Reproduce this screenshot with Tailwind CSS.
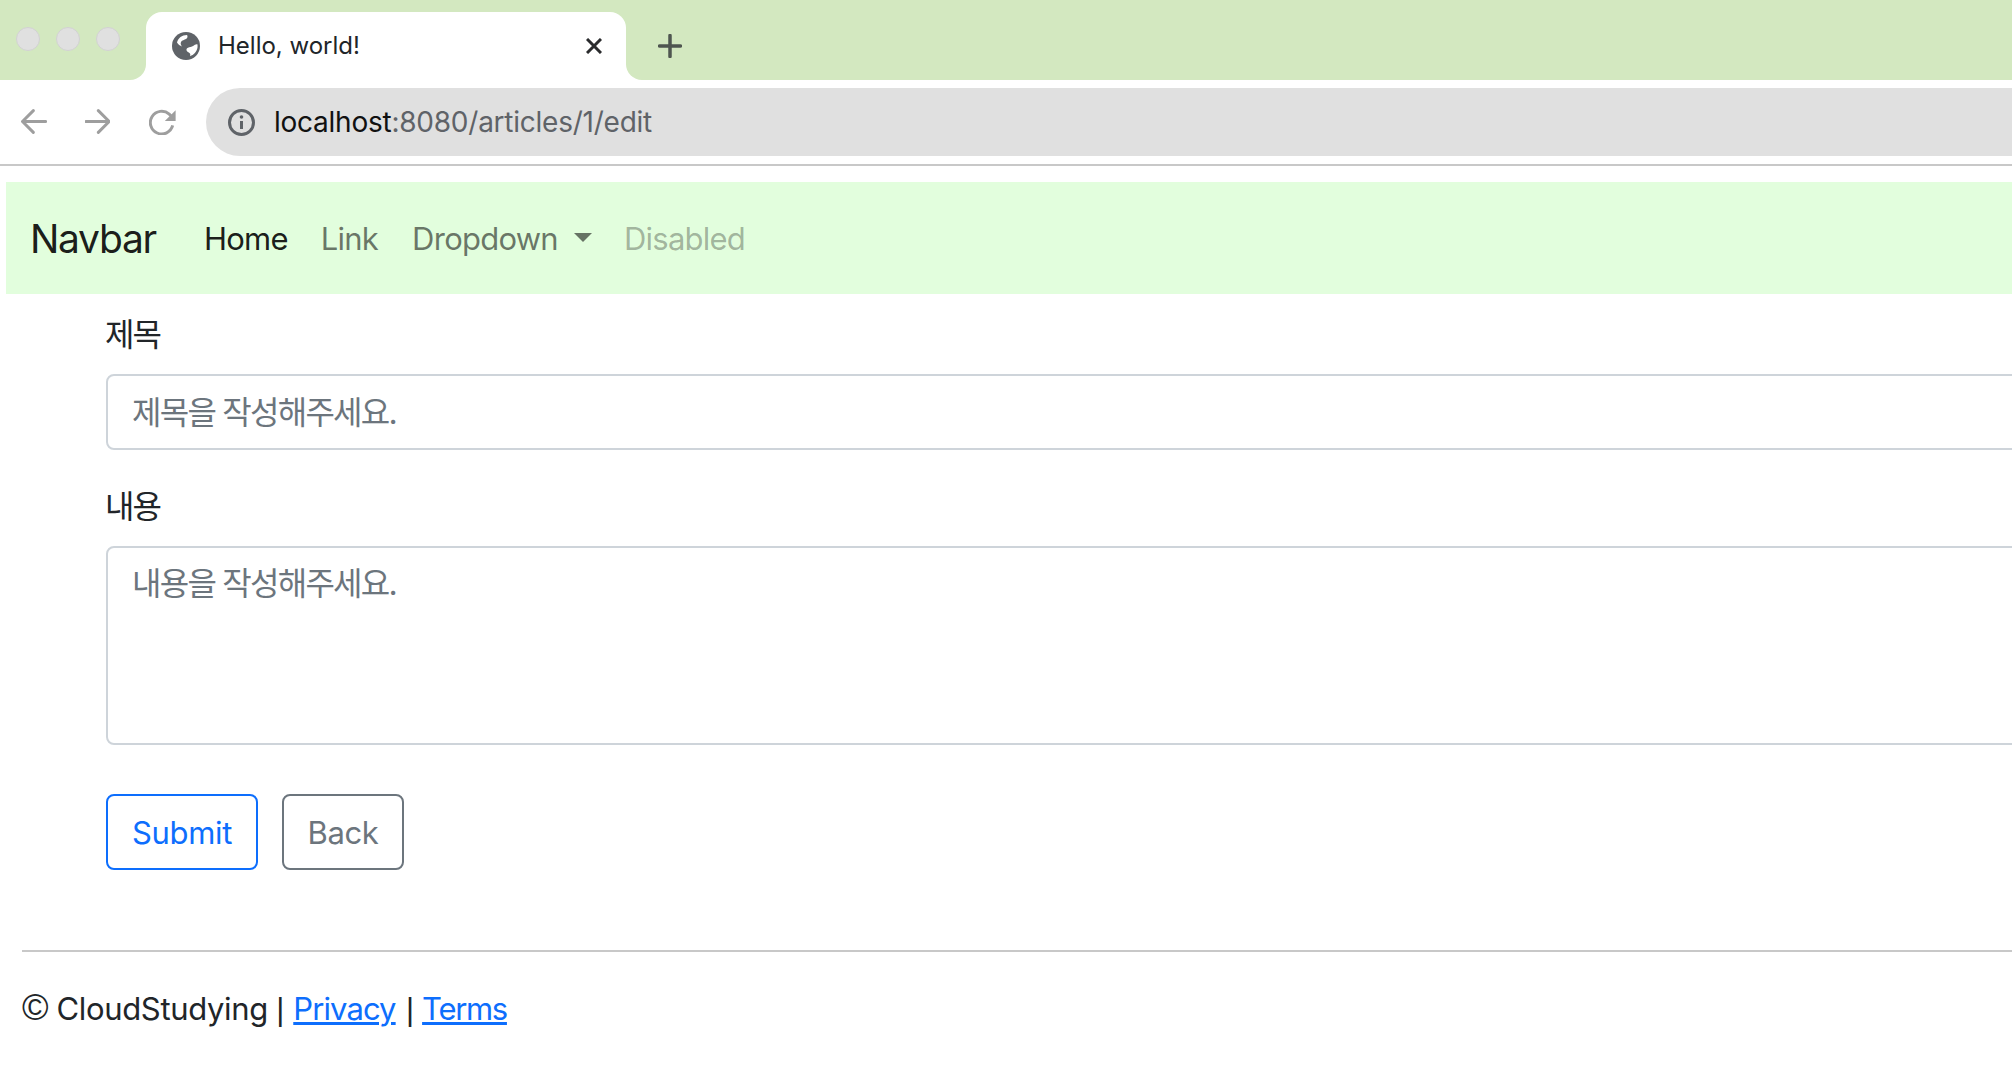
<!DOCTYPE html>
<html lang="ko">
<head>
<meta charset="utf-8">
<title>Hello, world!</title>
<script src="https://cdn.jsdelivr.net/npm/@tailwindcss/browser@4"></script>
</head>
<body class="w-[2012px] h-[1080px] overflow-hidden bg-white font-['Inter','Noto_Sans_CJK_KR',sans-serif] text-[#212529]">
<div class="w-[2012px] h-[166px]">
  <div class="h-[80px] bg-white flex">
    <div class="w-[146px] bg-[#d3e8c0] rounded-br-[16px] flex gap-[16px] pl-[16px] pt-[27px]">
      <span class="w-[24px] h-[24px] rounded-full bg-[#e0e0e0] border border-[#d2d2d2]"></span>
      <span class="w-[24px] h-[24px] rounded-full bg-[#e0e0e0] border border-[#d2d2d2]"></span>
      <span class="w-[24px] h-[24px] rounded-full bg-[#e0e0e0] border border-[#d2d2d2]"></span>
    </div>
    <div class="w-[480px] bg-[#d3e8c0] pt-[12px]">
      <div class="h-[68px] bg-white rounded-t-[16px] flex items-center pl-[26px] pr-[24px]">
        <svg class="w-[28px] h-[28px] shrink-0" viewBox="0 0 28 28"><circle cx="14" cy="14" r="14" fill="#5f6368"/><path d="M15 3c1 1.500.5 3-1 4-1.500 1-4 1-5 3-.8 1.600 0 3 1 4.500-2-.8-4-2-5-4C6 6 10 3 15 3ZM25.500 12.500c-1.500-.5-3 .5-4 1.200-2 1.200-4 1.300-5.500 2-1.500.6-1.800 1.800-1.300 3 .5 1.200 2 1.500 2.800 2.300 1 1 1 2 .5 3.200 3.800-1.300 6.800-4.500 7.500-8.700.1-1 .1-2 0-3Z" fill="#fff"/></svg>
        <span class="ml-[18px] text-[24px] leading-none">Hello, world!</span>
        <svg class="ml-auto w-[16px] h-[16px]" viewBox="0 0 16 16"><path d="M1 1l14 14M15 1L1 15" stroke="#2a2b2d" stroke-width="3" fill="none"/></svg>
      </div>
    </div>
    <div class="flex-1 bg-[#d3e8c0] rounded-bl-[16px] pl-[32px] pt-[34px]">
      <svg class="w-[24px] h-[24px]" viewBox="0 0 24 24"><path d="M12 1.500v21M1.500 12h21" stroke="#4f5650" stroke-width="3.500" stroke-linecap="round" fill="none"/></svg>
    </div>
  </div>
  <div class="h-[86px] border-b-2 border-[#c8c8c8] flex items-start bg-white">
    <svg class="ml-[21px] mt-[29px] w-[26px] h-[25px]" viewBox="0 0 26 25"><path d="M25 12.500H3M12.500 1.500 1.500 12.500l11 11" stroke="#9e9e9e" stroke-width="3" stroke-linecap="round" stroke-linejoin="round" fill="none"/></svg>
    <svg class="ml-[38px] mt-[29px] w-[26px] h-[25px]" viewBox="0 0 26 25"><path d="M1 12.500h22M13.500 1.500l11 11-11 11" stroke="#9e9e9e" stroke-width="3" stroke-linecap="round" stroke-linejoin="round" fill="none"/></svg>
    <svg class="ml-[39px] mt-[29px] w-[27px] h-[26px]" viewBox="0 0 27 26"><path d="M24 16.500A11.500 11.500 0 1 1 20.500 5l4 4" stroke="#9e9e9e" stroke-width="3" fill="none"/><path d="M27 1v11H16Z" fill="#9e9e9e"/></svg>
    <div class="ml-[30px] mt-[8px] w-[1830px] h-[68px] bg-[#e0e0e0] rounded-l-[34px] flex items-center pl-[22px]">
      <svg class="w-[27px] h-[27px] shrink-0" viewBox="0 0 27 27"><circle cx="13.500" cy="13.500" r="12" stroke="#5f6368" stroke-width="3" fill="none"/><path d="M13.500 12v8" stroke="#5f6368" stroke-width="3"/><circle cx="13.500" cy="8" r="1.800" fill="#5f6368"/></svg>
      <span class="ml-[19px] text-[28px] leading-none tracking-[-0.24px] text-[#111]">localhost<span class="text-[#5f6368]">:8080/articles/1/edit</span></span>
    </div>
  </div>
</div>
<nav class="mt-[16px] ml-[6px] h-[112px] bg-[#e2fedd] flex items-center pl-[24px] text-[31px] leading-none tracking-[-0.75px]">
  <a class="text-[39px] tracking-[-1.3px] text-black/90 mr-[48px]">Navbar</a>
  <a class="text-black/90 mr-[33px]">Home</a>
  <a class="text-black/55 mr-[34px]">Link</a>
  <a class="text-black/55 mr-[32px] flex items-center">Dropdown<span class="ml-[16px] mb-[2px] w-0 h-0 border-x-[9px] border-x-transparent border-t-[9px] border-t-black/55"></span></a>
  <a class="text-black/30">Disabled</a>
</nav>
<main class="pl-[106px] w-[2100px] pr-[20px]">
  <label class="block mt-[21px] -ml-[1px] h-[40px] leading-[40px] text-[32px] tracking-[-2px]">제목</label>
  <input class="block mt-[19px] w-full h-[76px] rounded-[8px] border-2 border-[#ced4da] px-[24px] text-[32px] tracking-[-1.75px] placeholder:text-[#6c757d] bg-white" placeholder="제목을 작성해주세요.">
  <label class="block mt-[37px] -ml-[1px] h-[40px] leading-[40px] text-[32px] tracking-[-2px]">내용</label>
  <textarea class="block mt-[19px] w-full h-[199px] rounded-[8px] border-2 border-[#ced4da] px-[24px] py-[12px] text-[32px] leading-[48px] tracking-[-1.75px] placeholder:text-[#6c757d] bg-white resize-none" placeholder="내용을 작성해주세요."></textarea>
  <div class="mt-[49px] flex gap-[24px]">
    <button class="w-[152px] h-[76px] pt-[2px] rounded-[8px] border-2 border-[#0d6efd] text-[#0d6efd] text-[31px] tracking-[-0.3px]">Submit</button>
    <button class="w-[122px] h-[76px] pt-[2px] rounded-[8px] border-2 border-[#6c757d] text-[#6c757d] text-[31px] tracking-[-0.4px]">Back</button>
  </div>
</main>
<footer class="mt-[80px] ml-[22px]">
  <hr class="border-t-2 border-[#c8c8c8]">
  <p class="mt-[37px] text-[31px] leading-[40px] tracking-[-0.35px]"><span class="font-['Liberation_Sans'] text-[36px] leading-none">©</span> CloudStudying <span class="font-['Liberation_Sans']">|</span> <a class="ml-[1px] text-[#0d6efd] underline tracking-[-0.9px]">Privacy</a> <span class="ml-[2px] font-['Liberation_Sans']">|</span> <a class="text-[#0d6efd] underline tracking-[-1.3px]">Terms</a></p>
</footer>
</body>
</html>
